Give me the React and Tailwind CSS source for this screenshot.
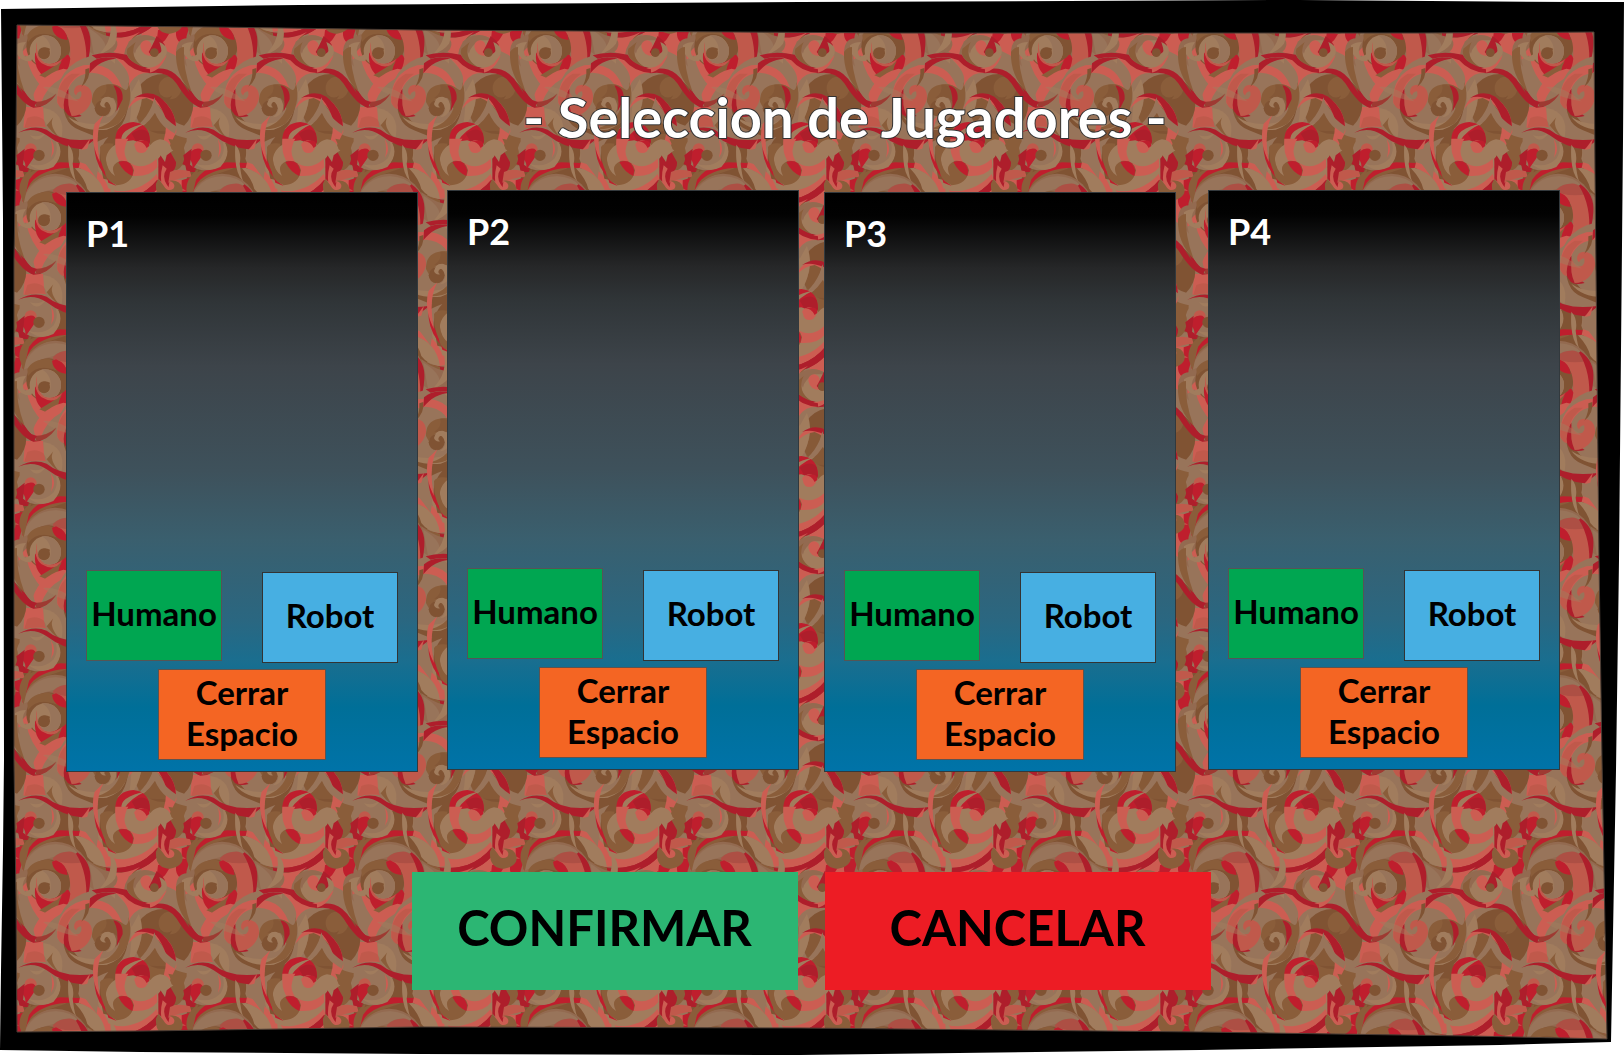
import React from "react";

const RED = "#BF1E2D";
const DEEP = "#AE1E2B";
const SALMON = "#CC5D52";
const CORAL = "#C0594B";
const DARK = "#805333";
const BROWN = "#8A5D3A";
const TAUPE = "#98745A";
const TAN = "#A17C5D";
const UMBER = "#936A50";

// Repeats every shape in the neighbouring tiles so that the seams join.
function Tiled({ children }) {
  const at = [-501, 0, 501];
  return React.Children.map(children, (shape) =>
    at.map((y) =>
      at.map((x) => (
        <g key={`${x}:${y}`} transform={`translate(${x} ${y})`}>
          {shape}
        </g>
      ))
    )
  );
}

// One repeat of the scrollwork, on a 501-unit square.
function Scrollwork() {
  return (
    <Tiled>
      {/* grounds */}
      <path fill={DARK} d="M60 600Q50 500 120 460L290 440L310 560L260 640L130 640Z" />
      <path fill={TAUPE} d="M235 500Q240 450 320 440L330 600Q260 580 235 500Z" />
      <path fill={SALMON} d="M440 590L500 560L620 570L640 700L560 700L420 640Z" />
      <path fill={BROWN} d="M350 405Q450 380 560 415L560 520L480 520L400 470Z" />

      {/* wide band */}
      <path fill={TAN} d="M238 -30Q236 60 290 98Q350 125 430 105Q470 80 485 30L300 -40Z" />
      <path fill={TAUPE} d="M238 -30Q236 60 290 98Q310 60 285 0L260 -60Z" />
      <path fill={SALMON} d="M284 60Q320 97 370 97Q430 90 470 45L480 70Q430 125 380 124Q330 124 300 100Z" />
      <path fill={DEEP} d="M300 118Q350 130 400 114Q445 96 472 62L482 78Q440 130 380 136Q330 140 300 132Z" />
      <path fill={BROWN} d="M230 80Q290 124 350 126Q400 128 430 112L400 140Q300 150 250 110Z" />
      <path fill={DEEP} d="M318 123Q360 128 400 114Q445 96 472 62L482 78Q440 130 380 136Q340 140 318 136Z" />
      <path fill={UMBER} d="M262 100Q310 140 370 138L390 135L420 190L300 200L270 180Z" />
      <path fill={SALMON} d="M345 138Q385 138 420 120Q375 150 372 190L340 180Q362 160 345 138Z" />
      <path fill={TAUPE} d="M268 110Q320 140 318 175L285 205Z" />
      <path fill={TAN} d="M328 76Q362 110 345 155Q330 175 296 188Q345 140 328 76Z" />

      {/* flames between the columns */}
      <path fill={SALMON} d="M478 115Q520 80 560 100L600 200L560 240L500 185L480 150Z" />
      <path fill={RED} d="M528 130Q525 92 556 95L568 60L600 50Q580 110 590 150Q560 165 545 158Q530 145 528 130Z" />
      <path fill={RED} d="M474 115L490 106L512 118L495 145L455 180Q450 155 470 148Z" />

      {/* ring */}
      <circle cx="165" cy="152" r="108" fill={UMBER} />
      <path fill={TAUPE} d="M66 132Q95 50 170 52Q215 55 235 80Q190 65 160 90Q110 100 85 125Z" />
      <path fill={BROWN} d="M62 60Q120 10 200 28L150 45Q95 60 70 110Z" />
      <path fill={RED} d="M72 95Q95 22 180 10L240 12L236 27Q150 20 100 62Q85 75 66 132Z" />
      <path fill={SALMON} d="M240 10Q320 30 332 118L316 120Q308 50 236 27Z" />
      <path fill={TAN} d="M236 27Q308 50 318 120Q280 115 262 90Q255 60 225 28Z" />
      <path fill={SALMON} d="M110 150Q60 170 58 205Q75 240 95 300L130 270L200 230L205 170Z" />
      <circle cx="145" cy="163" r="66" fill={DARK} />
      <path fill={BROWN} d="M82 130Q95 100 145 98L190 112Q180 140 160 130Q110 115 84 150Z" />
      <circle cx="136" cy="177" r="47" fill={TAN} />
      <path fill={TAUPE} d="M125 130Q165 125 182 165Q188 205 155 215Q125 215 110 195Q130 210 150 195Q160 150 125 130Z" />
      <path fill={CORAL} d="M158 98Q190 62 235 88Q270 115 268 170Q262 215 230 245L190 240Q215 220 210 165Q205 110 158 98Z" />
      <path fill="#AD4F44" d="M160 92Q180 72 215 74Q245 85 252 105Q210 115 158 100Z" />
      <path fill={DEEP} d="M232 76Q275 105 271 160Q268 200 258 225Q265 140 228 80Z" />
      <path fill={RED} d="M156 104Q160 140 203 144Q200 112 168 100Z" />
      <path fill={RED} d="M105 180Q100 250 155 262Q205 258 211 200Q205 180 195 195Q150 230 120 208Z" />
      <path fill={BROWN} d="M118 250Q160 225 185 207Q170 235 176 258L150 263Z" />
      <path fill={CORAL} d="M110 150Q108 195 135 214Q165 220 188 200Q165 238 125 214Q100 195 110 150Z" />
      <circle cx="132" cy="184" r="18" fill={DARK} />
      <path fill={DARK} d="M116 176Q130 160 150 170Q146 178 149 186Z" />

      {/* trunk */}
      <path fill={TAUPE} d="M52 205Q60 270 95 335L130 290Q90 250 78 190Z" />
      <path fill={UMBER} d="M28 200Q20 130 75 140Q50 170 56 205Q65 260 90 310L60 270Z" />
      <path fill={TAN} d="M45 160Q60 150 78 150Q60 175 75 195Q100 190 108 150Q112 185 92 208Q60 210 45 175Z" />
      <path fill={TAUPE} d="M92 335Q120 260 215 235L230 310L160 350L130 345Z" />
      <path fill={SALMON} d="M92 335Q110 250 190 230L240 240Q150 258 124 330Z" />
      <path fill={SALMON} d="M75 345L130 345L138 405Q100 400 70 410Z" />
      <path fill={CORAL} d="M82 378Q110 365 134 385L138 405Q100 398 72 410Z" />

      {/* bulb */}
      <circle cx="490" cy="336" r="90" fill={DARK} />
      <path fill={BROWN} d="M400 320Q450 300 500 350L550 420L420 415Z" opacity=".6" />
      <circle cx="510" cy="288" r="34" fill={BROWN} />
      <path fill={DARK} d="M482 308Q500 324 517 310Q508 328 496 334Z" />

      {/* great spiral */}
      <ellipse cx="298" cy="312" rx="128" ry="122" fill={TAUPE} />
      <path fill={TAN} d="M310 192Q425 210 426 310Q420 380 385 410Q400 340 390 290Q370 220 310 192Z" />
      <path fill={TAUPE} d="M345 195Q390 250 420 255L395 300Q380 250 345 225Z" />
      <path fill={DARK} d="M190 300Q180 390 240 420Q300 450 350 415Q390 380 384 300L365 320Q350 400 290 408Q220 400 200 310Z" />
      <circle cx="290" cy="326" r="84" fill={TAUPE} />
      <path fill={SALMON} d="M172 335Q165 245 250 220Q345 205 370 300L362 335Q345 245 275 242Q225 245 205 290L195 350Z" />
      <path fill={DEEP} d="M205 290Q180 320 190 345Q200 385 245 372Q205 345 205 290Z" />
      <path fill={CORAL} d="M172 330Q170 270 215 245L240 245Q205 270 200 300Q188 330 192 352Q178 350 172 330Z" />
      <path fill={TAN} d="M205 375Q250 405 320 392Q375 370 380 300Q395 390 320 413Q240 420 205 375Z" />
      <path fill={BROWN} d="M276 330Q275 285 315 278Q345 270 372 292Q385 300 386 270Q405 340 355 395Q320 415 280 411Q340 398 358 350Q355 320 330 315Q300 318 284 345Z" />
      <path fill={DARK} d="M318 278Q350 275 358 310Q365 340 345 362Q352 335 340 318L300 318Q325 300 318 278Z" opacity=".6" />
      <path fill={DEEP} d="M340 280Q370 285 368 322L350 358Q358 310 340 280Z" />
      <path fill={TAN} d="M300 340Q300 314 325 314Q352 322 348 350Q342 372 318 376Q350 350 318 332Q308 330 300 340Z" />
      <circle cx="308" cy="349" r="24" fill={DARK} />
      <path fill={TAN} d="M300 336Q306 314 327 315Q345 322 345 345Q335 325 318 330Q308 340 318 346Q304 348 300 336Z" />
      <path fill={CORAL} d="M222 300Q222 278 245 278Q278 282 276 320Q262 370 215 372Q200 340 206 300Q212 320 232 320Q240 318 240 312Q225 314 222 300Z" />
      <path fill={TAUPE} d="M208 290Q212 330 238 320Q248 312 243 298Q230 300 228 312Q215 305 222 290L215 280Z" />
      <path fill={DARK} d="M268 228Q272 262 244 284Q258 260 256 232Z" />
      <path fill={DEEP} d="M270 214Q300 187 350 200Q300 202 268 244Z" />
      <path fill={TAN} d="M130 285Q175 280 235 328Q165 318 130 285Z" opacity=".5" />

      {/* fan */}
      <path fill={TAUPE} d="M130 345L165 305Q180 390 240 415L292 436L270 458Q170 455 135 400Z" />
      <path fill={TAN} d="M130 348Q198 360 185 435L150 415L132 385Z" />
      <path fill={BROWN} d="M160 376Q145 400 180 440Q152 418 140 400Z" />
      <path fill={DEEP} d="M52 245Q75 318 105 330Q140 330 170 305Q140 348 100 347Q72 340 52 245Z" />
      <path fill={BROWN} d="M95 330Q140 332 170 302Q150 342 105 345Z" opacity=".45" />

      {/* horns and arcs by the bulb */}
      <path fill={TAUPE} d="M463 318Q450 375 395 415L355 425Q410 430 432 400Q450 385 465 362Q480 400 520 425Q560 445 590 435L590 410Q500 400 463 318Z" />
      <path fill={SALMON} d="M385 350Q400 302 455 307Q530 335 529 420L500 480L490 450Q520 350 440 318Q405 322 385 350Z" />
      <path fill={DEEP} d="M402 318Q440 292 478 314Q528 355 528 405L508 412Q490 350 468 325Q430 308 402 318Z" />
      <path fill={TAUPE} d="M456 345L463 316Q480 375 530 404L525 425Q480 400 463 355Z" />
      <path fill={TAUPE} d="M475 170Q580 190 610 345Q540 240 470 228Z" />
      <path fill={BROWN} d="M528 180Q538 165 552 165Q548 230 575 300Q525 250 528 180Z" />
      <path fill={DEEP} d="M380 195Q420 230 470 230Q520 225 550 275Q580 325 612 330L602 346Q570 340 530 275Q500 235 450 244Q400 240 380 195Z" />
      <path fill={SALMON} d="M340 192Q385 205 425 236Q460 220 500 190Q480 245 430 244Q400 250 385 285Q400 240 340 192Z" />
      <path fill={DEEP} d="M275 190Q320 176 380 188Q400 225 450 232L450 243Q400 240 370 205Q330 188 290 200Z" />

      {/* small upper spiral */}
      <ellipse cx="447" cy="180" rx="46" ry="47" fill={TAN} />
      <path fill={UMBER} d="M385 150Q430 110 478 145L440 145Q410 160 405 185Z" />
      <path fill={BROWN} d="M407 150Q385 195 430 225Q372 205 382 170Z" />
      <circle cx="438" cy="162" r="17" fill={SALMON} />
      <path fill={SALMON} d="M422 165Q425 192 458 192L450 165Z" />
      <path fill={DEEP} d="M446 180Q455 165 470 132L485 145L495 160Q485 190 455 192Z" />
      <circle cx="463" cy="182" r="13" fill={DARK} />
      <path fill={TAN} d="M470 225Q495 195 478 150Q512 165 495 195Z" />

      {/* small lower spiral */}
      <path fill={DEEP} d="M45 480L65 460L110 470L85 535L45 515Z" />
      <ellipse cx="115" cy="478" rx="65" ry="57" fill={TAUPE} />
      <path fill={TAN} d="M85 515Q130 530 160 500Q178 475 165 440Q200 480 160 525Q120 545 85 515Z" />
      <path fill={TAN} d="M90 430Q120 440 142 416L132 430Q110 455 90 430Z" />
      <circle cx="92" cy="472" r="18" fill={CORAL} />
      <path fill={RED} d="M62 500Q70 465 100 470Q115 478 102 496L75 535Q80 505 62 500Z" />
      <circle cx="117" cy="490" r="17" fill={DARK} />
      <path fill={SALMON} d="M152 440Q172 470 153 497Q160 470 152 440Z" />
      <path fill={DEEP} d="M55 422Q100 396 140 413Q190 455 288 440L245 472Q190 468 140 430Q100 402 55 422Z" />
      <path fill={SALMON} d="M245 474L270 440L262 470Z" />

      {/* leaf spiral */}
      <path fill={DARK} d="M287 440Q310 410 375 410L345 460Q330 540 375 575L310 560Z" />
      <path fill={TAUPE} d="M245 500Q255 460 325 435Q300 460 298 500L290 560Z" />
      <path fill={RED} d="M284 440Q275 530 350 582L325 572Q315 530 298 500Z" />
      <path fill={SALMON} d="M310 370Q282 420 300 510Q268 450 284 395Z" />
      <path fill={BROWN} d="M300 465Q310 450 340 455L330 540L350 575Q300 550 300 465Z" />
      <path fill={RED} d="M346 440Q350 393 400 390Q450 395 450 450L430 475L360 462Z" />
      <path fill={DEEP} d="M395 425Q430 400 447 425L450 450L440 470L410 450Z" />
      <path fill={TAN} d="M365 447Q355 412 440 393Q390 415 372 447Z" />
      <path fill={TAN} d="M318 500Q325 450 400 445L470 470L478 520Q430 590 350 572Q318 550 318 500Z" />
      <path fill={SALMON} d="M346 440Q340 520 400 552Q450 555 472 525L470 495Q425 540 385 500Q365 475 385 440Z" />
      <path fill={TAN} d="M385 452Q362 478 385 510Q430 540 470 500L455 460L430 450Z" />
      <circle cx="424" cy="464" r="19" fill={SALMON} />
      <path fill={SALMON} d="M403 462Q400 448 422 446L445 470L430 480Z" />
      <path fill={RED} d="M412 448Q450 440 448 462L440 468Q430 448 412 448Z" />
      <path fill={TAN} d="M447 497Q440 450 480 442Q510 445 515 475Q490 460 478 500Z" />
      <path fill={BROWN} d="M345 552Q310 520 350 508Q395 500 402 535Q395 578 350 580Q300 560 320 505Q325 540 345 552Z" />
      <path fill={TAN} d="M318 500Q320 535 345 552Q328 520 358 508L345 480L325 480Z" />
      <path fill={RED} d="M355 510Q390 498 400 535L397 552Q370 540 355 510Z" />
      <path fill={TAN} d="M205 458Q225 480 218 515Q222 550 228 568Q200 540 205 458Z" />

      {/* hooks */}
      <path fill={BROWN} d="M505 440Q570 450 550 510Q540 540 515 535L530 495Z" />
      <path fill={DEEP} d="M475 500L490 482L510 478L528 510Q530 530 512 545L505 590L475 560Z" />
      <path fill={DEEP} d="M550 490L575 470L570 520L590 540L560 540Z" />
      <path fill={CORAL} d="M510 540Q535 528 570 538L575 555Q540 555 505 572Z" />
      <path fill={SALMON} d="M500 530Q480 560 512 592L495 605Q475 570 488 520Z" />
      <path fill={RED} d="M545 565L575 555L570 600L545 590Z" />
      <path fill={BROWN} d="M468 575Q465 625 510 626Q550 620 548 590Q540 562 508 566Q530 575 520 590Q502 602 490 580L475 560Z" />
      <path fill={BROWN} d="M560 600Q555 560 595 530L572 635Z" />
      <path fill={TAN} d="M490 460L520 475L500 490L495 510L475 480Z" />
    </Tiled>
  );
}

function Backdrop() {
  return (
    <svg
      aria-hidden="true"
      viewBox="0 0 1624 1055"
      preserveAspectRatio="none"
      className="h-full w-full [grid-area:1/1]"
    >
      <defs>
        <pattern id="scrollwork" x="0" y="-8" width="167" height="167" patternUnits="userSpaceOnUse" viewBox="0 0 501 501">
          <rect width="501" height="501" fill={TAUPE} />
          <Scrollwork />
        </pattern>
      </defs>
      <path d="M1 9L300 5L800 2L1300 0L1575 2H1624L1623 140L1619 560L1616 770L1611 1042L1500 1045L1200 1050L800 1055L420 1054L140 1052L0 1050L1 970L3 850L4 760L3 220Z" />
      <path
        fill="url(#scrollwork)"
        stroke="#4a3c34"
        d="M17 25L213 27L420 30L900 33H1418L1594 32L1595 173L1599 560L1602 760L1607 1039L1470 1036L1200 1032L800 1028L420 1027L144 1031L17 1032L16 900L14 760V260L16 140Z"
      />
    </svg>
  );
}

const players = [
  { name: "P1", place: "mt-0.5" },
  { name: "P2", place: "ml-[29px]" },
  { name: "P3", place: "mt-0.5 ml-[25px]" },
  { name: "P4", place: "ml-8" },
];

function PlayerCard({ name, place }) {
  return (
    <section
      aria-label={name}
      className={`flex h-[580px] flex-1 flex-col justify-between border border-[#33393d] bg-[linear-gradient(#000_0%,#020202_4%,#262728_13%,#303538_19%,#3d444a_30%,#3e515b_48%,#3a5f6e_60%,#2a6781_74%,#1a6e8f_81%,#006f98_89%,#0073a8_100%)] px-[19px] pt-4 pb-[11px] ${place}`}
    >
      <h2 className="text-[36px] leading-[48px] font-bold text-white">{name}</h2>
      <div className="flex flex-col gap-1.5 text-[33px] font-bold text-black">
        <div className="flex justify-between">
          <button type="button" className="h-[91px] w-[136px] border border-[#555] bg-[#00a651] pb-1">
            Humano
          </button>
          <button type="button" className="mt-0.5 h-[91px] w-[136px] border border-[#333] bg-[#47afe2] pb-1">
            Robot
          </button>
        </div>
        <button type="button" className="h-[91px] w-[168px] self-center border border-[#5c5350] bg-[#f46523] pb-1 leading-[41px]">
          Cerrar
          <br />
          Espacio
        </button>
      </div>
    </section>
  );
}

export default function App() {
  return (
    <div className="grid min-h-screen bg-white font-['Lato','Open_Sans',sans-serif]">
      <Backdrop />
      <main className="flex flex-col pr-16 pl-[66px] [grid-area:1/1]">
        <h1 className="mt-[84px] pl-16 text-center text-[56px] leading-[66px] font-bold text-white [-webkit-text-stroke:2px_#333] [paint-order:stroke_fill]">
          - Seleccion de Jugadores -
        </h1>
        <div className="mt-10 flex items-start">
          {players.map((p) => (
            <PlayerCard key={p.name} {...p} />
          ))}
        </div>
        <div className="mt-[100px] flex justify-center gap-[27px] pr-1 text-[49px] font-bold text-black">
          <button type="button" className="h-[118px] w-[386px] bg-[#2cb673] pb-1.5">
            CONFIRMAR
          </button>
          <button type="button" className="h-[118px] w-[386px] bg-[#ed1c24] pb-1.5">
            CANCELAR
          </button>
        </div>
      </main>
    </div>
  );
}
